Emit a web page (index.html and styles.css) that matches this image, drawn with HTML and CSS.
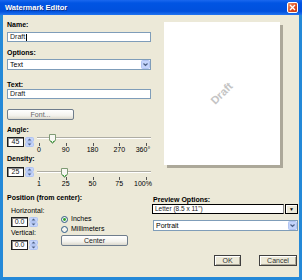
FILE: index.html
```html
<!DOCTYPE html>
<html lang="en">
<head>
  <meta charset="UTF-8" />
  <meta name="viewport" content="width=device-width, initial-scale=1.0"/>
  <title>Watermark Editor</title>
  <link rel="stylesheet" href="styles.css">
</head>
<body>
<div class="window">
  <div class="titlebar">
    <span class="title">Watermark Editor</span>
    <span class="close">
      <svg width="9" height="9" viewBox="0 0 9 9"><path d="M2 2 L7 7 M7 2 L2 7" stroke="#fff" stroke-width="1.4"/></svg>
    </span>
  </div>

  <div class="client">
    <div class="left">
      <div class="lbl">Name:</div>
      <div class="field name-field">Draft<span class="caret"></span></div>

      <div class="lbl lbl-options">Options:</div>
      <div class="combo">
        <span>Text</span>
        <svg class="combo-btn" width="9" height="9" viewBox="0 0 9 9"><rect x="0.5" y="0.5" width="8" height="8" rx="1" fill="#c4d4fb" stroke="#b1c4f2"/><path d="M2.5 3.5 L4.5 5.5 L6.5 3.5" fill="none" stroke="#4d6185" stroke-width="1.2"/></svg>
      </div>

      <div class="lbl lbl-text">Text:</div>
      <div class="field text-field">Draft</div>

      <div class="btn font-btn">Font...</div>

      <!-- angle -->
      <div class="lbl lbl-angle">Angle:</div>
      <div class="slider-row">
        <div class="spinner">
          <span class="spin-val">45</span>
          <svg class="spin-btns" width="10" height="10" viewBox="0 0 10 10"><rect x="1.5" y="0.5" width="8" height="4" rx="1" fill="#c4d4fb" stroke="#b1c4f2"/><rect x="1.5" y="5.5" width="8" height="4" rx="1" fill="#c4d4fb" stroke="#b1c4f2"/><path d="M3.5 3.5 L5.5 1.5 L7.5 3.5 Z M3.5 6.5 L5.5 8.5 L7.5 6.5 Z" fill="#4d6185"/></svg>
        </div>
        <div class="slider">
          <div class="track">
            <svg class="thumb" style="left:12px" width="7" height="10" viewBox="0 0 7 10"><path d="M0.5 0.5 H6.5 V6.5 L3.5 9.5 L0.5 6.5 Z" fill="#f7f7f2" stroke="#7e9a74"/><path d="M1.5 6.5 L3.5 8.5 L5.5 6.5" fill="none" stroke="#3ea63e"/></svg>
          </div>
          <div class="marks"><i></i><i></i><i></i><i></i><i></i></div>
        </div>
      </div>
      <div class="ticks angle-ticks">
        <span>0</span><span>90</span><span>180</span><span>270</span><span class="last">360°</span>
      </div>

      <!-- density -->
      <div class="lbl lbl-density">Density:</div>
      <div class="slider-row density-row">
        <div class="spinner">
          <span class="spin-val">25</span>
          <svg class="spin-btns" width="10" height="10" viewBox="0 0 10 10"><rect x="1.5" y="0.5" width="8" height="4" rx="1" fill="#c4d4fb" stroke="#b1c4f2"/><rect x="1.5" y="5.5" width="8" height="4" rx="1" fill="#c4d4fb" stroke="#b1c4f2"/><path d="M3.5 3.5 L5.5 1.5 L7.5 3.5 Z M3.5 6.5 L5.5 8.5 L7.5 6.5 Z" fill="#4d6185"/></svg>
        </div>
        <div class="slider">
          <div class="track">
            <svg class="thumb" style="left:24.4px" width="7" height="10" viewBox="0 0 7 10"><path d="M0.5 0.5 H6.5 V6.5 L3.5 9.5 L0.5 6.5 Z" fill="#f7f7f2" stroke="#7e9a74"/><path d="M1.5 6.5 L3.5 8.5 L5.5 6.5" fill="none" stroke="#3ea63e"/></svg>
          </div>
          <div class="marks"><i></i><i></i><i></i><i></i><i></i></div>
        </div>
      </div>
      <div class="ticks">
        <span>1</span><span>25</span><span>50</span><span>75</span><span class="last">100%</span>
      </div>

      <!-- position -->
      <div class="lbl lbl-pos">Position (from center):</div>
      <div class="pos">
        <div class="pos-fields">
          <div class="sublbl">Horizontal:</div>
          <div class="spinner pos-h">
            <span class="spin-val">0.0</span>
            <svg class="spin-btns" width="10" height="10" viewBox="0 0 10 10"><rect x="1.5" y="0.5" width="8" height="4" rx="1" fill="#c4d4fb" stroke="#b1c4f2"/><rect x="1.5" y="5.5" width="8" height="4" rx="1" fill="#c4d4fb" stroke="#b1c4f2"/><path d="M3.5 3.5 L5.5 1.5 L7.5 3.5 Z M3.5 6.5 L5.5 8.5 L7.5 6.5 Z" fill="#4d6185"/></svg>
          </div>
          <div class="sublbl sublbl-v">Vertical:</div>
          <div class="spinner pos-v">
            <span class="spin-val">0.0</span>
            <svg class="spin-btns" width="10" height="10" viewBox="0 0 10 10"><rect x="1.5" y="0.5" width="8" height="4" rx="1" fill="#c4d4fb" stroke="#b1c4f2"/><rect x="1.5" y="5.5" width="8" height="4" rx="1" fill="#c4d4fb" stroke="#b1c4f2"/><path d="M3.5 3.5 L5.5 1.5 L7.5 3.5 Z M3.5 6.5 L5.5 8.5 L7.5 6.5 Z" fill="#4d6185"/></svg>
          </div>
        </div>
        <div class="pos-units">
          <div class="radio">
            <svg width="7" height="7" viewBox="0 0 7 7"><circle cx="3.5" cy="3.5" r="3" fill="#f4f4ee" stroke="#2f5a85"/><circle cx="3.5" cy="3.5" r="1.4" fill="#2aa12a"/></svg>
            <span>Inches</span>
          </div>
          <div class="radio">
            <svg width="7" height="7" viewBox="0 0 7 7"><circle cx="3.5" cy="3.5" r="3" fill="#f4f4ee" stroke="#2f5a85"/></svg>
            <span>Millimeters</span>
          </div>
          <div class="btn center-btn">Center</div>
        </div>
      </div>
    </div>

    <div class="right">
      <div class="preview"><span class="wm">Draft</span></div>

      <div class="lbl lbl-preview">Preview Options:</div>
      <div class="paper">
        <span class="paper-text">Letter (8.5 x 11")</span>
        <span class="paper-btn">▼</span>
      </div>
      <div class="combo orient">
        <span>Portrait</span>
        <svg class="combo-btn" width="9" height="9" viewBox="0 0 9 9"><rect x="0.5" y="0.5" width="8" height="8" rx="1" fill="#c4d4fb" stroke="#b1c4f2"/><path d="M2.5 3.5 L4.5 5.5 L6.5 3.5" fill="none" stroke="#4d6185" stroke-width="1.2"/></svg>
      </div>

      <div class="actions">
        <div class="btn2 ok">OK</div>
        <div class="btn2 cancel">Cancel</div>
      </div>
    </div>
  </div>
</div>
</body>
</html>
```

FILE: styles.css
```css
* {
  box-sizing: border-box;
}

html, body {
  margin: 0;
}

body {
  font-family: 'Liberation Sans', Arial, sans-serif;
  font-size: 7px;
  line-height: 8px;
  color: #000;
  background: #2489d8;
}

.window {
  width: 302px;
  height: 280px;
  display: flex;
  flex-direction: column;
  background: #2489d8;
}

/* title bar */
.titlebar {
  height: 15px;
  flex: none;
  display: flex;
  align-items: center;
  justify-content: space-between;
  padding: 0 4px 0 5px;
  background: linear-gradient(#1a68ef 0, #0054e3 20%, #0050dd 75%, #2274f0 100%);
}

.title {
  color: #fff;
  font-weight: bold;
  font-size: 7.5px;
  text-shadow: 1px 1px 0 #0a3190;
}

.close {
  width: 11px;
  height: 11px;
  border: 1px solid #fff;
  border-radius: 2px;
  background: linear-gradient(135deg, #f09a70, #dc4a1e 60%, #c83c12);
  display: flex;
  align-items: center;
  justify-content: center;
}

/* client area */
.client {
  flex: 1;
  display: flex;
  margin: 0 3px 3px;
  background: #ece9d8;
}

.left {
  width: 148px;
  flex: none;
  padding: 6px 0 0 4px;
  display: flex;
  flex-direction: column;
}

.lbl {
  font-weight: bold;
  height: 8px;
}

.lbl-options { margin-top: 7px; }
.lbl-text { margin-top: 11px; }
.lbl-angle { margin-top: 6px; }
.lbl-density { margin-top: 1px; }
.lbl-pos { margin-top: 6px; }

.field {
  height: 10px;
  border: 1px solid #7f9db9;
  background: #fff;
  padding-left: 2px;
  color: #222;
  display: flex;
  align-items: center;
}

.name-field { margin-top: 3px; }

.caret {
  width: 1px;
  height: 7px;
  margin-left: 1px;
  background: #000;
}

.combo {
  height: 11px;
  margin-top: 2px;
  border: 1px solid #7f9db9;
  background: #fff;
  padding-left: 2px;
  display: flex;
  align-items: center;
  justify-content: space-between;
}

.combo-btn {
  display: block;
}

.btn {
  height: 11px;
  border: 1px solid #6f7d8c;
  border-radius: 2px;
  background: linear-gradient(#fff, #f4f3ee 60%, #dcd9cd);
  text-align: center;
  line-height: 9px;
  color: #222;
  align-self: flex-start;
}

.font-btn {
  width: 67px;
  margin-top: 10px;
  color: #666;
}

/* sliders */
.slider-row {
  display: flex;
  align-items: flex-start;
  margin-top: 3px;
}

.density-row {
  margin-top: 4px;
}

.spinner {
  display: flex;
  height: 10px;
  flex: none;
}

.spin-val {
  width: 17px;
  border: 1px solid #1e1e1e;
  box-shadow: inset 1px 1px 0 #8a8a8a;
  background: #fff;
  text-align: center;
  line-height: 8px;
  color: #222;
}

.spin-btns {
  display: block;
}

.slider {
  flex: 1;
  margin-left: 3px;
  display: flex;
  flex-direction: column;
}

.density-row .slider {
  padding-top: 4px;
}

.track {
  position: relative;
  height: 2px;
  border-top: 1px solid #aeada4;
  background: #fff;
}

.thumb {
  position: absolute;
  top: -4px;
  display: block;
}

.marks {
  display: flex;
  justify-content: space-between;
  height: 3px;
  margin: 4px 4px 0 2px;
}

.marks i {
  width: 1px;
  background: #555;
}

.ticks {
  display: grid;
  grid-template-columns: repeat(5, 26.75px);
  margin-left: 18.6px;
  height: 8px;
}

.angle-ticks {
  margin-top: -1px;
}

.ticks span {
  text-align: center;
  white-space: nowrap;
}

.ticks .last {
  transform: translateX(-3px);
}

/* position */
.pos {
  display: flex;
  margin-top: 5px;
}

.pos-fields {
  width: 54px;
  padding-left: 4px;
  display: flex;
  flex-direction: column;
  align-items: flex-start;
}

.sublbl {
  height: 8px;
}

.pos-h { margin-top: 2px; }
.sublbl-v { margin-top: 2px; }
.pos-v { margin-top: 3px; }

.pos-units {
  padding-top: 7px;
  display: flex;
  flex-direction: column;
}

.radio {
  display: flex;
  align-items: center;
  gap: 3px;
  height: 10px;
}

.radio svg {
  display: block;
}

.center-btn {
  width: 67px;
  margin-top: 1px;
}

/* right side */
.right {
  width: 147px;
  margin-left: 1px;
  padding-top: 7px;
  display: flex;
  flex-direction: column;
}

.preview {
  margin-left: 12px;
  width: 116px;
  height: 143px;
  background: #fff;
  box-shadow: 3px 3px 0 #aca899;
  display: flex;
  align-items: center;
  justify-content: center;
}

.wm {
  transform: rotate(-45deg);
  font-size: 11px;
  font-weight: bold;
  color: #c4c4c4;
  line-height: 11px;
}

.lbl-preview {
  margin-top: 31px;
  padding-left: 1px;
}

.paper {
  display: flex;
  height: 10px;
  margin-right: 1px;
}

.paper-text {
  flex: 1;
  border: 1px solid #000;
  border-right-color: #888;
  background: #fff;
  padding-left: 2px;
  font-size: 6.5px;
  line-height: 8px;
  color: #222;
}

.paper-btn {
  width: 13px;
  margin-left: 1px;
  border: 1px solid #000;
  background: #ece9d8;
  box-shadow: inset 1px 1px 0 #fff;
  font-size: 5px;
  line-height: 8px;
  text-align: center;
}

.orient {
  margin: 6px 1px 0 1px;
}

.actions {
  display: flex;
  justify-content: flex-end;
  gap: 18px;
  margin: 24px 2px 0 0;
}

.btn2 {
  height: 11px;
  border: 1px solid #404040;
  box-shadow: inset 1px 1px 0 #fff, inset -1px -1px 0 #aca899;
  background: #ece9d8;
  text-align: center;
  line-height: 9px;
  color: #333;
}

.ok { width: 27px; }
.cancel { width: 38px; }
```
